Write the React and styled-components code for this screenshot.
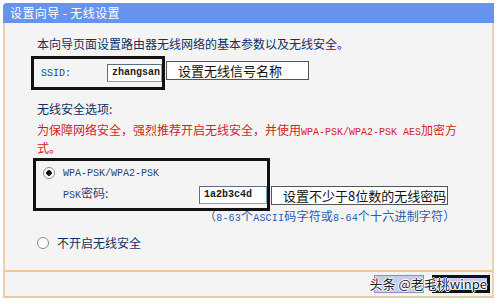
import styled, { createGlobalStyle } from "styled-components"

const GlobalStyle = createGlobalStyle`
    html, body {
        margin: 0;
        padding: 0;
        background: #ffffff;
        width: 500px;
        height: 304px;
        overflow: hidden;
    }
    body {
        font-family: "Noto Sans CJK SC", "DejaVu Sans", sans-serif;
        font-size: 12px;
    }
`

const App = () => {
    return (
        <>
            <GlobalStyle />
            <Page>
                <Frame>
                    <TitleBar>设置向导 - 无线设置</TitleBar>
                    <Body>
                        <Intro>本向导页面设置路由器无线网络的基本参数以及无线安全。</Intro>
                        <FieldRow>
                            <Highlight $pad="5px 0 5px 7px" $ml="-6px">
                                <InlineRow $h="18px">
                                    <Mono $w="66px">SSID:</Mono>
                                    <Input $w="55px">zhangsan</Input>
                                </InlineRow>
                            </Highlight>
                            <Note $w="143px" $mt="5px">设置无线信号名称</Note>
                        </FieldRow>

                        <Heading>无线安全选项:</Heading>
                        <Warning>
                            <WarnLine>为保障网络安全，强烈推荐开启无线安全，并使用<RedMono>WPA-PSK/WPA2-PSK AES</RedMono>加密方</WarnLine>
                            <WarnLine>式。</WarnLine>
                        </Warning>

                        <FieldRow $align="flex-end" $mt="0">
                            <Highlight $pad="2px 0 2px 7px" $ml="-4px" $w="237px">
                                <RadioLine $h="20px">
                                    <Radio $checked />
                                    <Mono>WPA-PSK/WPA2-PSK</Mono>
                                </RadioLine>
                                <InlineRow $h="23px" $indent="20px">
                                    <PskLabel><Mono>PSK</Mono>密码:</PskLabel>
                                    <Input $w="68px">1a2b3c4d</Input>
                                </InlineRow>
                            </Highlight>
                            <Note $w="177px" $mb="6px">设置不少于8位数的无线密码</Note>
                        </FieldRow>
                        <Hint>（<HintMono>8-63</HintMono>个<HintMono>ASCII</HintMono>码字符或<HintMono>8-64</HintMono>个十六进制字符）</Hint>

                        <RadioLine $h="22px" $mt="8px">
                            <Radio />
                            <Option>不开启无线安全</Option>
                        </RadioLine>
                    </Body>
                    <Footer>
                        <Button $w="50px" />
                        <Button $w="58px" $strong />
                        <Watermark>头条 @老毛桃winpe</Watermark>
                    </Footer>
                </Frame>
            </Page>
        </>
    )
}
export default App

const Page = styled.div`
    width: 500px;
    height: 304px;
    padding: 3px 0 0 3px;
    box-sizing: border-box;
`
const Frame = styled.div`
    width: 491px;
    display: flex;
    flex-direction: column;
`
const TitleBar = styled.div`
    height: 20px;
    line-height: 20px;
    background: #6593ee;
    color: #ffffff;
    padding-left: 7px;
    border-radius: 4px 0 0 0;
    font-size: 12px;
    letter-spacing: 0.4px;
    white-space: nowrap;
`
const Body = styled.div`
    height: 249px;
    box-sizing: border-box;
    background: #f4f4f5;
    border-left: 2px solid #ecd2ad;
    border-right: 2px solid #ecd2ad;
    border-bottom: 2px solid #e6c9a0;
    padding: 12px 0 0 32px;
    color: #14305e;
    overflow: hidden;
`
const Intro = styled.div`
    line-height: 18px;
    height: 18px;
    white-space: nowrap;
`
const FieldRow = styled.div`
    display: flex;
    align-items: ${p => p.$align || "flex-start"};
    margin-top: ${p => p.$mt || "3px"};
`
const Highlight = styled.div`
    border: 3px solid #111111;
    padding: ${p => p.$pad};
    margin-left: ${p => p.$ml};
    width: ${p => p.$w || "auto"};
    box-sizing: border-box;
    position: relative;
    z-index: 1;
`
const InlineRow = styled.div`
    display: flex;
    align-items: center;
    padding-left: ${p => p.$indent || "0"};
    height: ${p => p.$h};
`
const Mono = styled.span`
    font-family: "Liberation Mono", "DejaVu Sans Mono", monospace;
    font-size: 10px;
    color: #2a4678;
    display: inline-block;
    width: ${p => p.$w || "auto"};
`
const Input = styled.div`
    width: ${p => p.$w};
    height: 18px;
    box-sizing: border-box;
    background: #ffffff;
    border: 1px solid #8aa0b8;
    border-top-color: #5f6f80;
    border-left-color: #5f6f80;
    font-family: "Liberation Mono", "DejaVu Sans Mono", monospace;
    font-size: 10px;
    font-weight: bold;
    color: #1a1a1a;
    line-height: 16px;
    padding-left: 4px;
    white-space: nowrap;
`
const Note = styled.div`
    width: ${p => p.$w};
    height: 19px;
    box-sizing: border-box;
    background: #ffffff;
    border: 1px solid #555555;
    font-size: 13px;
    line-height: 17px;
    color: #111111;
    padding-left: 11px;
    margin-left: 1px;
    margin-top: ${p => p.$mt || "0"};
    margin-bottom: ${p => p.$mb || "0"};
    white-space: nowrap;
    overflow: hidden;
`
const Heading = styled.div`
    margin-top: 10px;
    line-height: 18px;
    height: 18px;
`
const Warning = styled.div`
    margin-top: 3px;
    color: #d21f1f;
    height: 37px;
`
const WarnLine = styled.div`
    line-height: 18px;
    height: 18px;
    white-space: nowrap;
`
const RedMono = styled.span`
    font-family: "Liberation Mono", "DejaVu Sans Mono", monospace;
    font-size: 10px;
    line-height: 12px;
`
const RadioLine = styled.div`
    display: flex;
    align-items: center;
    gap: 8px;
    height: ${p => p.$h};
    margin-top: ${p => p.$mt || "0"};
`
const Radio = styled.span`
    width: 12px;
    height: 12px;
    box-sizing: border-box;
    border-radius: 50%;
    border: 1px solid #8c8c8c;
    background: radial-gradient(circle, ${p => (p.$checked ? "#111 0 2.5px, #fff 3px" : "#fff 0")});
    flex: none;
`
const PskLabel = styled.span`
    width: 136px;
    color: #2a4678;
    line-height: 18px;
`
const Hint = styled.div`
    margin-left: 167px;
    color: #2d5cad;
    line-height: 16px;
    height: 16px;
    margin-top: -3px;
    white-space: nowrap;
    letter-spacing: 0.2px;
`
const HintMono = styled.span`
    font-family: "Liberation Mono", "DejaVu Sans Mono", monospace;
    font-size: 10px;
    line-height: 12px;
`
const Option = styled.span`
    font-size: 12px;
    line-height: 18px;
`
const Footer = styled.div`
    height: 26px;
    box-sizing: border-box;
    background: #f4f4f5;
    border-left: 2px solid #ecd2ad;
    border-right: 2px solid #ecd2ad;
    border-bottom: 2px solid #e6c9a0;
    display: flex;
    justify-content: flex-end;
    align-items: center;
    gap: 8px;
    padding-right: 2px;
    position: relative;
`
const Button = styled.div`
    width: ${p => p.$w};
    height: 18px;
    box-sizing: border-box;
    background: #c9caf0;
    border: ${p => (p.$strong ? "3px solid #111" : "1px solid #8d8fb8")};
`
const Watermark = styled.div`
    position: absolute;
    right: 5px;
    top: 3px;
    font-size: 13px;
    line-height: 18px;
    color: #1b1b2a;
    text-shadow: 1px 0 0 #fff, -1px 0 0 #fff, 0 1px 0 #fff, 0 -1px 0 #fff;
    white-space: nowrap;
`
